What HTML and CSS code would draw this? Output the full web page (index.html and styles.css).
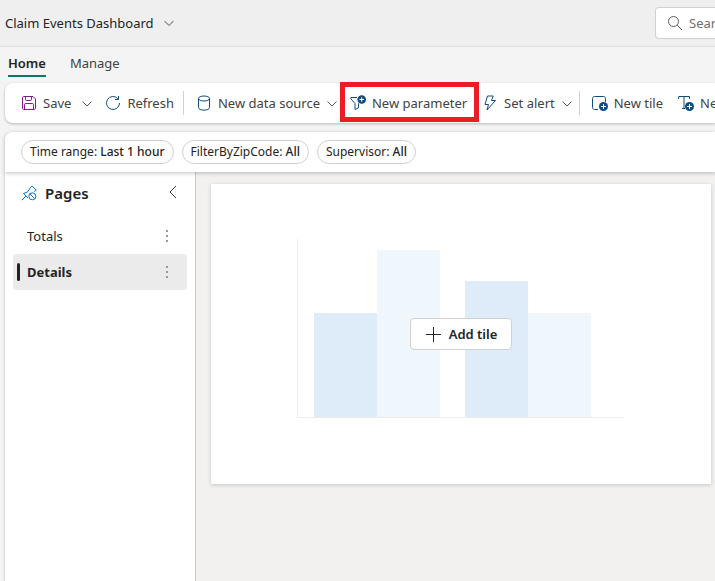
FILE: index.html
```html
<!DOCTYPE html>
<html lang="en">
<head>
<meta charset="utf-8">
<meta name="viewport" content="width=device-width, initial-scale=1">
<title>Claim Events Dashboard</title>
<link rel="stylesheet" href="styles.css">
</head>
<body>
<header class="header">
  <button class="title" type="button">Claim Events Dashboard
    <svg class="chevron" viewBox="0 0 12 12" aria-hidden="true"><path d="M1.500 4 6 8.500 10.500 4"/></svg>
  </button>
  <div class="search">
    <svg class="icon gray" viewBox="0 0 16 16" aria-hidden="true"><circle cx="6.500" cy="6.500" r="5"/><path d="m10.200 10.200 4.800 4.800"/></svg>
    <input type="text" placeholder="Search" aria-label="Search">
  </div>
</header>

<nav class="tabs">
  <a class="tab active" href="#home">Home</a>
  <a class="tab" href="#manage">Manage</a>
</nav>

<div class="toolbar">
  <button class="tool" type="button">
    <svg class="icon purple" viewBox="0 0 16 16" aria-hidden="true"><path d="M3 1.500h9l2.500 2.500v9c0 1-.5 1.500-1.500 1.500H3c-1 0-1.500-.5-1.500-1.500V3c0-1 .5-1.500 1.500-1.500ZM4.500 1.500v3c0 .7.300 1 1 1h4c.7 0 1-.3 1-1v-3M3.500 14.500V9.500c0-.7.300-1 1-1h7c.7 0 1 .3 1 1v5"/></svg>
    <span>Save</span>
  </button>
  <button class="drop" type="button" aria-label="Save options"><svg class="chevron" viewBox="0 0 12 12" aria-hidden="true"><path d="M1.500 4.500 6 9l4.500-4.500"/></svg></button>
  <button class="tool" type="button">
    <svg class="icon blue" viewBox="0 0 16 16" aria-hidden="true"><path d="M14.500 8A6.500 6.500 0 1 1 12.800 3.600M13.500 1v3.500H10"/></svg>
    <span>Refresh</span>
  </button>
  <span class="divider"></span>
  <button class="tool" type="button">
    <svg class="icon blue" viewBox="0 0 16 16" aria-hidden="true"><ellipse cx="8" cy="3.500" rx="5.500" ry="2.500"/><path d="M2.500 3.500v9C2.500 14 5 15.200 8 15.200s5.500-1.200 5.500-2.700v-9"/></svg>
    <span>New data source</span>
    <svg class="chevron" viewBox="0 0 12 12" aria-hidden="true"><path d="M1.500 4.500 6 9l4.500-4.500"/></svg>
  </button>
  <button class="tool highlighted" type="button">
    <svg class="icon blue" viewBox="0 0 16 16" aria-hidden="true"><path d="M7 2.500H.8v1.300L5 8.500v6l3.500-1.700V8.500L9.500 7.500"/><circle class="badge" cx="11.700" cy="4.500" r="4.300"/><path class="plus" d="M11.700 2.300v4.400M9.500 4.500h4.400"/></svg>
    <span>New parameter</span>
  </button>
  <button class="tool" type="button">
    <svg class="icon blue" viewBox="0 0 16 16" aria-hidden="true"><path d="M5.500 1h5.700L9.500 5.500h4L5 15l1.500-5.500H3Z"/></svg>
    <span>Set alert</span>
    <svg class="chevron" viewBox="0 0 12 12" aria-hidden="true"><path d="M1.500 4.500 6 9l4.500-4.500"/></svg>
  </button>
  <span class="divider"></span>
  <button class="tool" type="button">
    <svg class="icon blue" viewBox="0 0 16 16" aria-hidden="true"><path d="M6 14.500H2.500c-1 0-2-.8-2-2v-9c0-1 .8-2 2-2h9c1.200 0 2 .8 2 2V7"/><circle class="badge" cx="11.500" cy="11.500" r="4.500"/><path class="plus" d="M11.500 9v5M9 11.500h5"/></svg>
    <span>New tile</span>
  </button>
  <button class="tool" type="button">
    <svg class="icon blue" viewBox="0 0 16 16" aria-hidden="true"><path d="M.7 4V1.500h10.800V4M6 1.500v12M4 13.500h3"/><circle class="badge" cx="11.500" cy="11.500" r="4.500"/><path class="plus" d="M11.500 9v5M9 11.500h5"/></svg>
    <span>New text tile</span>
  </button>
</div>

<div class="filters">
  <button class="pill" type="button">Time range: <b>Last 1 hour</b></button>
  <button class="pill" type="button">FilterByZipCode: <b>All</b></button>
  <button class="pill" type="button">Supervisor: <b>All</b></button>
</div>

<div class="workspace">
  <aside class="sidebar">
    <div class="pages-head">
      <svg class="icon pin" viewBox="0 0 16 16" aria-hidden="true"><path d="M.8 15.200 5 11M7 13 2.500 8.500 6.500 7l3-4.500L11 1l4.200 4.200-2 1.500"/><circle cx="11.300" cy="11.300" r="3.500"/><path d="m8.900 8.900 4.800 4.800"/></svg>
      <h2>Pages</h2>
      <button class="collapse" type="button" aria-label="Collapse pages"><svg viewBox="0 0 12 16" aria-hidden="true"><path d="M9 1 3 7l6 6"/></svg></button>
    </div>
    <ul class="pages">
      <li class="page"><a href="#totals">Totals</a><button class="more" type="button" aria-label="Totals options"><i></i><i></i><i></i></button></li>
      <li class="page current"><a href="#details">Details</a><button class="more" type="button" aria-label="Details options"><i></i><i></i><i></i></button></li>
    </ul>
  </aside>
  <main class="canvas">
    <section class="card">
      <svg class="chart" viewBox="0 0 328 190" aria-hidden="true">
        <path class="bar-light" d="M80 11h63v168H80zM231 74h63v105h-63z"/>
        <path class="bar-dark" d="M17 74h63v105H17zM168 42h63v137h-63z"/>
        <path class="axis" d="M.5 0v178.500H327"/>
      </svg>
      <button class="add" type="button">
        <svg class="icon" viewBox="0 0 16 16" aria-hidden="true"><path d="M8.500 1v15M1 8.500h15"/></svg>
        <span>Add tile</span>
      </button>
    </section>
  </main>
</div>
</body>
</html>
```
FILE: styles.css
```css
* { box-sizing: border-box; }

body {
  margin: 0;
  min-height: 100vh;
  display: flex;
  flex-direction: column;
  background: #f4f4f4;
  color: #242424;
  font: 13px/20px "Segoe UI", "Noto Sans", sans-serif;
}

button {
  padding: 0;
  border: 0;
  background: none;
  color: inherit;
  font: inherit;
  white-space: nowrap;
}

a { color: inherit; text-decoration: none; }

svg { flex: none; fill: none; stroke: currentColor; }

.icon { width: 16px; height: 16px; }
.chevron { width: 12px; height: 12px; color: #555; }
.blue { color: #0f4c81; }
.purple { color: #881798; }
.gray { color: #616161; }
.badge { fill: #0f4c81; stroke: none; }
.plus { stroke: #fff; }

.header {
  height: 47px;
  display: flex;
  align-items: center;
  justify-content: space-between;
  padding-left: 5px;
  background: #efefef;
  border-bottom: 1px solid #dedede;
}

.title { display: flex; align-items: center; gap: 9px; }

.search {
  display: flex;
  align-items: center;
  gap: 6px;
  width: 60px;
  height: 32px;
  padding-left: 11px;
  background: #fff;
  border: 1px solid #d1d1d1;
  border-right: 0;
  border-radius: 4px 0 0 4px;
}

.search input {
  flex: 1;
  min-width: 0;
  padding: 0;
  border: 0;
  outline: 0;
  background: none;
  font: inherit;
}

.search input::placeholder { color: #707070; opacity: 1; }

.tabs { display: flex; gap: 24px; padding: 6px 8px; }
.tab { padding-bottom: 2px; border-bottom: 2px solid transparent; color: #424242; }
.tab.active { border-color: #117865; color: #242424; font-weight: 600; }

.toolbar {
  height: 40px;
  display: flex;
  align-items: center;
  gap: 12px;
  margin-left: 5px;
  padding-left: 16px;
  background: #fff;
  border-radius: 8px 0 0 8px;
  box-shadow: 0 1px 3px rgba(0, 0, 0, .25);
  color: #424242;
  /* Commands past the right edge are cut; the highlight may extend above and below. */
  overflow-x: clip;
  overflow-y: visible;
}

.tool { flex: none; display: flex; align-items: center; gap: 6px; }
.tool + .tool { margin-left: 3px; }
.tool .chevron { margin-right: -3px; }
.drop { flex: none; display: flex; margin-left: -2px; }
.divider { flex: none; width: 1px; height: 24px; margin-left: -3px; background: #d1d1d1; }

.highlighted { position: relative; }
.highlighted::after {
  content: "";
  position: absolute;
  inset: -11px -12px -9px -10px;
  border: 5px solid #ed1c24;
}

.filters {
  height: 40px;
  display: flex;
  align-items: center;
  gap: 8px;
  margin: 9px 0 0 5px;
  padding-left: 16px;
  position: relative;
  background: #fff;
  border-radius: 8px 0 0;
  box-shadow: 0 1px 4px rgba(0, 0, 0, .25);
}

.pill {
  height: 24px;
  padding: 0 8px;
  border: 1px solid #d1d1d1;
  border-radius: 12px;
  font-size: 12px;
}
.pill b { font-weight: 500; }

.workspace { flex: 1; display: flex; margin-left: 5px; }

.sidebar {
  flex: none;
  width: 191px;
  padding: 11px 8px;
  background: #fff;
  border-right: 1px solid #c8c8c8;
  box-shadow: -1px 0 2px rgba(0, 0, 0, .12);
}

.pages-head { display: flex; align-items: center; gap: 8px; padding: 0 8px; }
.pages-head h2 { flex: 1; margin: 0; font-size: 15px; font-weight: 600; }
.pin { color: #0078d4; }
.collapse { display: flex; color: #424242; }
.collapse svg { width: 12px; height: 16px; }

.pages { margin: 15px 0 0; padding: 0; list-style: none; }

.page {
  height: 36px;
  display: flex;
  align-items: center;
  padding-left: 14px;
  border-radius: 4px;
  position: relative;
}
.page a { flex: 1; }
.page.current { background: #ebebeb; font-weight: 700; }
.page.current::before {
  content: "";
  position: absolute;
  left: 4px;
  top: 9px;
  width: 3px;
  height: 18px;
  border-radius: 2px;
  background: #242424;
}

.more { display: grid; gap: 3px; padding: 8px 19px; }
.more i { width: 2px; height: 2px; background: #999; }

.canvas { flex: 1; min-width: 0; padding: 12px 4px 16px 15px; background: #f2f1f0; }

.card {
  display: grid;
  place-items: center;
  padding: 55px 86px;
  background: #fff;
  box-shadow: 0 1px 4px rgba(0, 0, 0, .18);
}

.chart, .add { grid-area: 1 / 1; }
.chart { width: 100%; stroke: none; }
.bar-dark { fill: #deebf8; }
.bar-light { fill: #eff6fc; }
.axis { stroke: #edebe9; }

.add {
  height: 32px;
  display: flex;
  align-items: center;
  gap: 8px;
  padding: 0 14px;
  background: #fff;
  border: 1px solid #d1d1d1;
  border-radius: 4px;
  font-weight: 600;
}
```
